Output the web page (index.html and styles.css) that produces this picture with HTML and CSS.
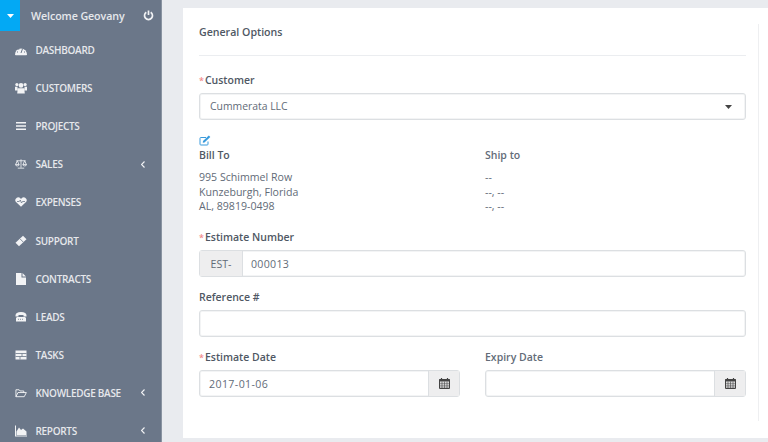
FILE: index.html
```html
<!DOCTYPE html>
<html lang="en">
<head>
  <meta charset="UTF-8">
  <title>New Estimate</title>
  <link rel="stylesheet" href="styles.css">
</head>
<body>
  <!-- Sidebar -->
  <aside class="sidebar">
    <div class="user-bar">
      <span class="user-toggle"><svg width="7" height="4" viewBox="0 0 7 4"><path d="M0 0h7L3.5 4z" fill="#fff"/></svg></span>
      <span class="user-name">Welcome Geovany</span>
      <svg class="power" width="11" height="11" viewBox="0 0 11 11"><path d="M3.3 2.2a4 4 0 1 0 4.4 0" fill="none" stroke="#f2f3f5" stroke-width="1.7"/><path d="M5.5 0.5v4.500" stroke="#f2f3f5" stroke-width="1.7"/></svg>
    </div>
    <nav class="menu">
      <a class="menu-item"><svg class="icon" viewBox="0 0 12 12"><path d="M0 10.500a6 6 0 0 1 12 0q0 .8-.8.8H.8q-.8 0-.8-.8z" fill="#f2f3f5"/><path d="M6 9L7.500 4.800M2 8h1M9 8h1M3.500 5.500h.7M6 4h.1" stroke="#6b7789" stroke-width="1"/></svg><span>Dashboard</span></a>
      <a class="menu-item"><svg class="icon" viewBox="0 0 12 12"><circle cx="6" cy="3.400" r="2.300" fill="#f2f3f5"/><circle cx="1.900" cy="2.600" r="1.600" fill="#f2f3f5"/><circle cx="10.100" cy="2.600" r="1.600" fill="#f2f3f5"/><path d="M2.800 6.200h6.400l.6 5.300H2.200zM0 4.700h2.500v3.800H0zM9.500 4.700H12v3.800H9.500z" fill="#f2f3f5"/></svg><span>Customers</span></a>
      <a class="menu-item"><svg class="icon" viewBox="0 0 12 12"><path d="M1 2h10v1.600H1zM1 5.200h10v1.600H1zM1 8.400h10V10H1z" fill="#f2f3f5"/></svg><span>Projects</span></a>
      <a class="menu-item"><svg class="icon" viewBox="0 0 13 12"><path d="M6.500 1v9M3 10.500h7M1.500 2.500h10M2.500 2.500L.7 6.500M2.500 2.500l1.800 4M10.500 2.500l-1.800 4M10.500 2.500l1.800 4M.5 6.500a2 1.600 0 0 0 4 0zM8.500 6.500a2 1.600 0 0 0 4 0z" fill="none" stroke="#f2f3f5" stroke-width=".9"/></svg><span>Sales</span><svg class="chevron" width="4" height="7" viewBox="0 0 4 7"><path d="M3.500.5l-3 3 3 3" fill="none" stroke="#f2f3f5" stroke-width="1.200"/></svg></a>
      <a class="menu-item"><svg class="icon" viewBox="0 0 12 12"><path d="M6 10.800L1 6Q-.3 4.500.6 2.900 2.300.5 4.400 1.600 5.500 2.200 6 3q.5-.8 1.600-1.400 2.100-1.100 3.800 1.300.9 1.600-.4 3.100z" fill="#f2f3f5"/><path d="M2 5.500h2.300l1-1.500 1.200 3 1-1.500H10" fill="none" stroke="#6b7789" stroke-width=".8"/></svg><span>Expenses</span></a>
      <a class="menu-item"><svg class="icon" viewBox="0 0 12 12"><path d="M8 .8l3.500 3.500-7.500 7-3.500-3.500z" fill="#f2f3f5"/><path d="M5 3.800l3.200 3.200" stroke="#6b7789" stroke-width=".8"/></svg><span>Support</span></a>
      <a class="menu-item"><svg class="icon" viewBox="0 0 12 12"><path d="M1 0h5.500v4.500H11V12H1zM7.500 0L11 3.500H7.500z" fill="#f2f3f5"/></svg><span>Contracts</span></a>
      <a class="menu-item"><svg class="icon" viewBox="0 0 12 12"><path d="M.5 4.500Q.5 1 6 1T11.500 4.500v1H8.500V4h-5v1.500H.5z" fill="#f2f3f5"/><path d="M2 6h8l1 1v3.500H1V7z" fill="#f2f3f5"/><path d="M3 8.300h6" stroke="#6b7789" stroke-width=".8" stroke-dasharray="1 1"/></svg><span>Leads</span></a>
      <a class="menu-item"><svg class="icon" viewBox="0 0 12 12"><path d="M.500 1.500h11v9H.500z" fill="#f2f3f5"/><path d="M.500 4.500h11M.500 7.500h11M7 4.500v3M5 7.500v3" stroke="#6b7789" stroke-width=".8"/></svg><span>Tasks</span></a>
      <a class="menu-item"><svg class="icon" viewBox="0 0 13 12"><path d="M1 10V2.500h3.500l1 1.300h4V6M1 10l2.200-4.500H12.300L10 10z" fill="none" stroke="#f2f3f5" stroke-width="1"/></svg><span>Knowledge Base</span><svg class="chevron" width="4" height="7" viewBox="0 0 4 7"><path d="M3.500.5l-3 3 3 3" fill="none" stroke="#f2f3f5" stroke-width="1.200"/></svg></a>
      <a class="menu-item"><svg class="icon" viewBox="0 0 12 12"><path d="M0 .5v11h12v-1H1V.5z" fill="#f2f3f5"/><path d="M1.500 10V6.500L4 2.500 6 5 8 3.500l3.500 3V10z" fill="#f2f3f5"/></svg><span>Reports</span><svg class="chevron" width="4" height="7" viewBox="0 0 4 7"><path d="M3.500.5l-3 3 3 3" fill="none" stroke="#f2f3f5" stroke-width="1.200"/></svg></a>
    </nav>
  </aside>

  <!-- Main content -->
  <main class="content">
    <div class="card">
      <div class="card-inner">
        <h4 class="card-title">General Options</h4>

        <div class="field field-customer">
          <label class="label"><span class="req">*</span>Customer</label>
          <div class="select-box">
            <span class="select-text">Cummerata LLC</span>
            <svg width="7" height="4" viewBox="0 0 7 4"><path d="M0 0h7L3.500 4z" fill="#444"/></svg>
          </div>
        </div>

        <svg class="edit-icon" width="12" height="11" viewBox="0 0 12 11"><path d="M9 6.500V9.200Q9 10 8.200 10H1.800Q1 10 1 9.200V3.300Q1 2.500 1.800 2.500H7" fill="none" stroke="#3a9bdc" stroke-width="1"/><path d="M4 6l5.800-5.500 1.500 1.400L5.500 7.500 3.800 7.800z" fill="#3a9bdc"/></svg>

        <div class="two-col address">
          <div>
            <div class="label">Bill To</div>
            <p class="addr-lines">995 Schimmel Row<br>Kunzeburgh, Florida<br>AL, 89819-0498</p>
          </div>
          <div>
            <div class="label label-light">Ship to</div>
            <p class="addr-lines">--<br>--, --<br>--, --</p>
          </div>
        </div>

        <div class="field field-number">
          <label class="label"><span class="req">*</span>Estimate Number</label>
          <div class="input-group">
            <span class="addon addon-left">EST-</span>
            <span class="input-text input-number">000013</span>
          </div>
        </div>

        <div class="field">
          <label class="label">Reference #</label>
          <div class="input-group"><span class="input-text"></span></div>
        </div>

        <div class="two-col">
          <div class="field">
            <label class="label"><span class="req">*</span>Estimate Date</label>
            <div class="input-group">
              <span class="input-text input-date">2017-01-06</span>
              <span class="addon addon-right"><svg width="11" height="12" viewBox="0 0 11 12"><path d="M.5 2.500h10v9H.5z" fill="none" stroke="#444"/><path d="M.5 2h10v2.500H.5z" fill="#444"/><path d="M2.500 1v2M8.500 1v2" stroke="#444" stroke-width="1.200"/><path d="M.5 6.300h10M.5 8.200h10M.5 10h10M3 4.500v7M5.500 4.500v7M8 4.500v7" stroke="#444" stroke-width=".6"/></svg></span>
            </div>
          </div>
          <div class="field">
            <label class="label label-light">Expiry Date</label>
            <div class="input-group">
              <span class="input-text"></span>
              <span class="addon addon-right"><svg width="11" height="12" viewBox="0 0 11 12"><path d="M.5 2.500h10v9H.5z" fill="none" stroke="#444"/><path d="M.5 2h10v2.500H.5z" fill="#444"/><path d="M2.500 1v2M8.500 1v2" stroke="#444" stroke-width="1.200"/><path d="M.5 6.300h10M.5 8.200h10M.5 10h10M3 4.500v7M5.500 4.500v7M8 4.500v7" stroke="#444" stroke-width=".6"/></svg></span>
            </div>
          </div>
        </div>
      </div>
    </div>
  </main>
</body>
</html>
```

FILE: styles.css
```css
/* General styling */
* {
  box-sizing: border-box;
}

html, body {
  height: 442px;
  overflow: hidden;
}

body {
  margin: 0;
  display: flex;
  font-family: "Open Sans", sans-serif;
  font-size: 10.6px;
  color: #626b77;
  background-color: #e9ebef;
}

/* Sidebar */
.sidebar {
  width: 162px;
  flex-shrink: 0;
  background-color: #6b7789;
  border-right: 1px solid #8993a1;
  color: #e6e8ec;
}

.user-bar {
  display: flex;
  align-items: center;
  height: 31px;
  padding-right: 7px;
}

.user-toggle {
  display: flex;
  justify-content: center;
  align-items: center;
  width: 20px;
  height: 31px;
  background-color: #03a9f4;
}

.user-name {
  flex: 1;
  margin-left: 11px;
  font-size: 10.7px;
  font-weight: 600;
  letter-spacing: -0.1px;
}

.menu-item {
  display: flex;
  align-items: center;
  height: 38.1px;
  padding: 0 16px 0 15px;
  font-size: 10px;
  font-weight: 600;
  letter-spacing: -0.3px;
  text-transform: uppercase;
}

.icon {
  width: 12px;
  height: 12px;
  margin-right: 8.5px;
  flex-shrink: 0;
}

.menu-item span {
  flex: 1;
}

/* Card */
.content {
  flex: 1;
  padding: 8px 0 4px 21px;
  min-width: 0;
}

.card {
  height: 430px;
  background-color: #fff;
  padding: 16px 9px 17px 16px;
}

.card-inner {
  height: 100%;
  border-right: 1px solid #eeeff1;
  padding-right: 12px;
}

.card-title {
  margin: 0;
  height: 32px;
  font-size: 10.6px;
  font-weight: 600;
  line-height: 16px;
  border-bottom: 1px solid #ebedf0;
  color: #4f5864;
}

/* Form */
.field {
  margin-bottom: 12px;
}

.field-customer {
  margin-top: 16px;
  margin-bottom: 15px;
}

.label {
  display: block;
  height: 16px;
  margin-bottom: 5px;
  font-size: 10.5px;
  font-weight: 600;
  line-height: 16px;
  color: #4f5864;
}

.label-light {
  color: #636c78;
}

.req {
  margin-right: 1px;
  color: #f28b8b;
  font-size: 9px;
}

.select-box,
.input-group {
  display: flex;
  align-items: stretch;
  height: 27px;
  border: 1px solid #dcdfe2;
  border-radius: 3px;
  background-color: #fff;
  box-shadow: inset 0 0 0 1px #f3f4f5;
}

.select-box {
  align-items: center;
  justify-content: space-between;
  padding: 0 13px 0 10px;
}

.select-text {
  padding-bottom: 2px;
  font-size: 10.4px;
}

.edit-icon {
  display: block;
  margin-bottom: 1px;
}

.two-col {
  display: grid;
  grid-template-columns: 261px 261px;
  column-gap: 25px;
}

.address .label {
  margin-bottom: 7px;
}

.addr-lines {
  margin: 0;
  line-height: 14.5px;
}

.field-number {
  margin-top: 15px;
}

.input-text {
  flex: 1;
  padding: 1px 0 0 9px;
  line-height: 25px;
}

.input-number {
  padding-left: 8px;
  letter-spacing: 0.3px;
}

.input-date {
  letter-spacing: 0.4px;
}

.addon {
  display: flex;
  align-items: center;
  justify-content: center;
  padding-top: 1px;
  background-color: #eeeeef;
}

.addon-left {
  width: 43px;
  border-right: 1px solid #dcdfe2;
}

.addon-right {
  width: 31px;
  padding-top: 0;
  border-left: 1px solid #dcdfe2;
}
```
